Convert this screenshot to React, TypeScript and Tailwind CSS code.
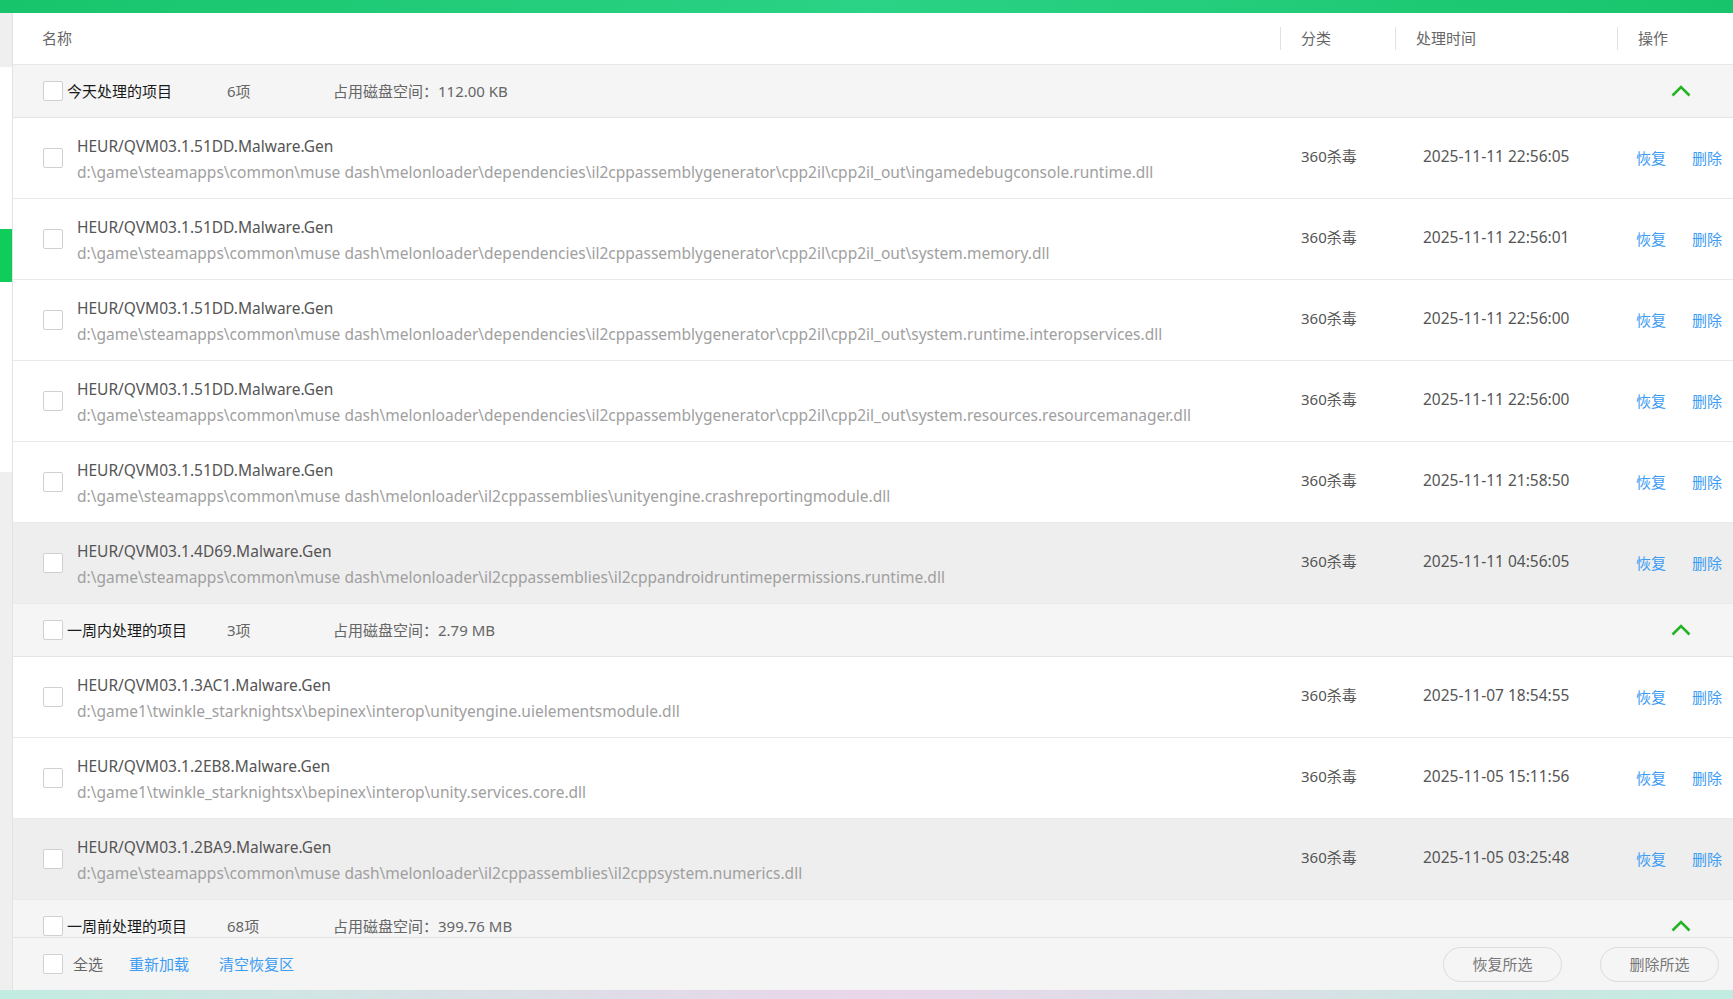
type Item = { name: string; path: string; time: string; hl?: boolean }
type Group = { title: string; count: string; size: string; items: Item[] }

// paths written with "/" and shown with "\"
const p = (s: string) => s.split('/').join('\\')
const base = 'd:/game/steamapps/common/muse dash/melonloader/'
const gen = base + 'dependencies/il2cppassemblygenerator/cpp2il/cpp2il_out/'

const groups: Group[] = [
  {
    title: '今天处理的项目',
    count: '6项',
    size: '112.00 KB',
    items: [
      { name: 'HEUR/QVM03.1.51DD.Malware.Gen', path: p(gen + 'ingamedebugconsole.runtime.dll'), time: '2025-11-11 22:56:05' },
      { name: 'HEUR/QVM03.1.51DD.Malware.Gen', path: p(gen + 'system.memory.dll'), time: '2025-11-11 22:56:01' },
      { name: 'HEUR/QVM03.1.51DD.Malware.Gen', path: p(gen + 'system.runtime.interopservices.dll'), time: '2025-11-11 22:56:00' },
      { name: 'HEUR/QVM03.1.51DD.Malware.Gen', path: p(gen + 'system.resources.resourcemanager.dll'), time: '2025-11-11 22:56:00' },
      { name: 'HEUR/QVM03.1.51DD.Malware.Gen', path: p(base + 'il2cppassemblies/unityengine.crashreportingmodule.dll'), time: '2025-11-11 21:58:50' },
      { name: 'HEUR/QVM03.1.4D69.Malware.Gen', path: p(base + 'il2cppassemblies/il2cppandroidruntimepermissions.runtime.dll'), time: '2025-11-11 04:56:05', hl: true },
    ],
  },
  {
    title: '一周内处理的项目',
    count: '3项',
    size: '2.79 MB',
    items: [
      { name: 'HEUR/QVM03.1.3AC1.Malware.Gen', path: p('d:/game1/twinkle_starknightsx/bepinex/interop/unityengine.uielementsmodule.dll'), time: '2025-11-07 18:54:55' },
      { name: 'HEUR/QVM03.1.2EB8.Malware.Gen', path: p('d:/game1/twinkle_starknightsx/bepinex/interop/unity.services.core.dll'), time: '2025-11-05 15:11:56' },
      { name: 'HEUR/QVM03.1.2BA9.Malware.Gen', path: p(base + 'il2cppassemblies/il2cppsystem.numerics.dll'), time: '2025-11-05 03:25:48', hl: true },
    ],
  },
  {
    title: '一周前处理的项目',
    count: '68项',
    size: '399.76 MB',
    items: [],
  },
]

const cols = 'grid grid-cols-[1267px_115px_222px_116px]'

function Box() {
  return <span className="w-[20px] h-[20px] shrink-0 rounded-[2px] border border-[#d0d0d0] bg-white" />
}

function Caret() {
  return (
    <svg width="20" height="12" viewBox="0 0 20 12" className="shrink-0">
      <polyline points="1.5,10.5 10,2 18.5,10.5" fill="none" stroke="#22b422" strokeWidth="2.6" />
    </svg>
  )
}

function HeadCell({ label }: { label: string }) {
  return (
    <div className="flex items-center">
      <div className="w-px h-[23px] bg-[#e2e2e2]" />
      <span className="ml-[20px]">{label}</span>
    </div>
  )
}

function GroupRow({ g }: { g: Group }) {
  return (
    <div className="flex items-center h-[53px] shrink-0 bg-[#f5f5f5] border-b border-[#e4e4e4] pl-[30px] pr-[42px] text-[15px]">
      <Box />
      <span className="ml-[4px] w-[160px] text-[#1a1a1a]">{g.title}</span>
      <span className="w-[106px] text-[#666]">{g.count}</span>
      <span className="text-[#666]">占用磁盘空间：{g.size}</span>
      <span className="ml-auto flex">
        <Caret />
      </span>
    </div>
  )
}

function ItemRow({ it }: { it: Item }) {
  return (
    <div className={`${cols} h-[81px] shrink-0 border-b border-[#e9e9e9] text-[15.5px] ${it.hl ? 'bg-[#eeeeee]' : 'bg-white'}`}>
      <div className="flex items-center pl-[30px] gap-[14px] min-w-0">
        <Box />
        <div className="flex flex-col leading-[24px]">
          <span className="mt-[2px] text-[#555]">{it.name}</span>
          <span className="mt-[2px] text-[#a0a0a0] whitespace-nowrap">{it.path}</span>
        </div>
      </div>
      <div className="flex items-center pl-[21px] text-[15px] text-[#555] -mt-[3px]">360杀毒</div>
      <div className="flex items-center pl-[28px] text-[#555] -mt-[3px]">{it.time}</div>
      <div className="flex items-center pl-[19px] gap-[26px] text-[15px] text-[#3d9cf3]">
        <span>恢复</span>
        <span>删除</span>
      </div>
    </div>
  )
}

export default function App() {
  return (
    <div
      className="w-[1733px] h-[999px] flex flex-col overflow-hidden bg-white"
      style={{ fontFamily: '"Noto Sans", "Noto Sans CJK SC", sans-serif' }}
    >
      <div className="h-[13px] shrink-0 bg-gradient-to-r from-[#17c46b] via-[#2ad385] to-[#17c46b]" />

      <div className="flex flex-1 min-h-0">
        {/* left strip */}
        <div className="w-[13px] shrink-0 flex flex-col border-r border-[#e2e2e2] bg-[#efefef]">
          <div className="h-[54px]" />
          <div className="h-[162px] bg-white" />
          <div className="h-[53px] bg-[#10cc5a]" />
          <div className="h-[190px] bg-white" />
        </div>

        <div className="flex-1 min-w-0 flex flex-col">
          {/* header */}
          <div className={`${cols} h-[52px] shrink-0 border-b border-[#e6e6e6] text-[15px] text-[#666]`}>
            <div className="flex items-center pl-[29px]">名称</div>
            <HeadCell label="分类" />
            <HeadCell label="处理时间" />
            <HeadCell label="操作" />
          </div>

          {/* list */}
          <div className="flex-1 min-h-0 overflow-hidden flex flex-col">
            {groups.map((g) => (
              <div key={g.title} className="flex flex-col shrink-0">
                <GroupRow g={g} />
                {g.items.map((it, i) => (
                  <ItemRow key={i} it={it} />
                ))}
              </div>
            ))}
          </div>

          {/* footer */}
          <div className="h-[53px] shrink-0 flex items-center bg-[#f5f5f5] border-t border-[#e2e2e2] pl-[30px] pr-[14px] text-[15px]">
            <Box />
            <span className="ml-[10px] text-[#666]">全选</span>
            <span className="ml-[26px] text-[#3d9cf3]">重新加载</span>
            <span className="ml-[30px] text-[#3d9cf3]">清空恢复区</span>
            <div className="ml-auto flex gap-[38px]">
              <button className="w-[119px] h-[35px] rounded-full border border-[#dcdcdc] text-[15px] text-[#777]">恢复所选</button>
              <button className="w-[119px] h-[35px] rounded-full border border-[#dcdcdc] text-[15px] text-[#777]">删除所选</button>
            </div>
          </div>
        </div>
      </div>

      <div className="h-[9px] shrink-0 bg-gradient-to-r from-[#c2ece1] via-[#ead6ea] to-[#c2ece1]" />
    </div>
  )
}
